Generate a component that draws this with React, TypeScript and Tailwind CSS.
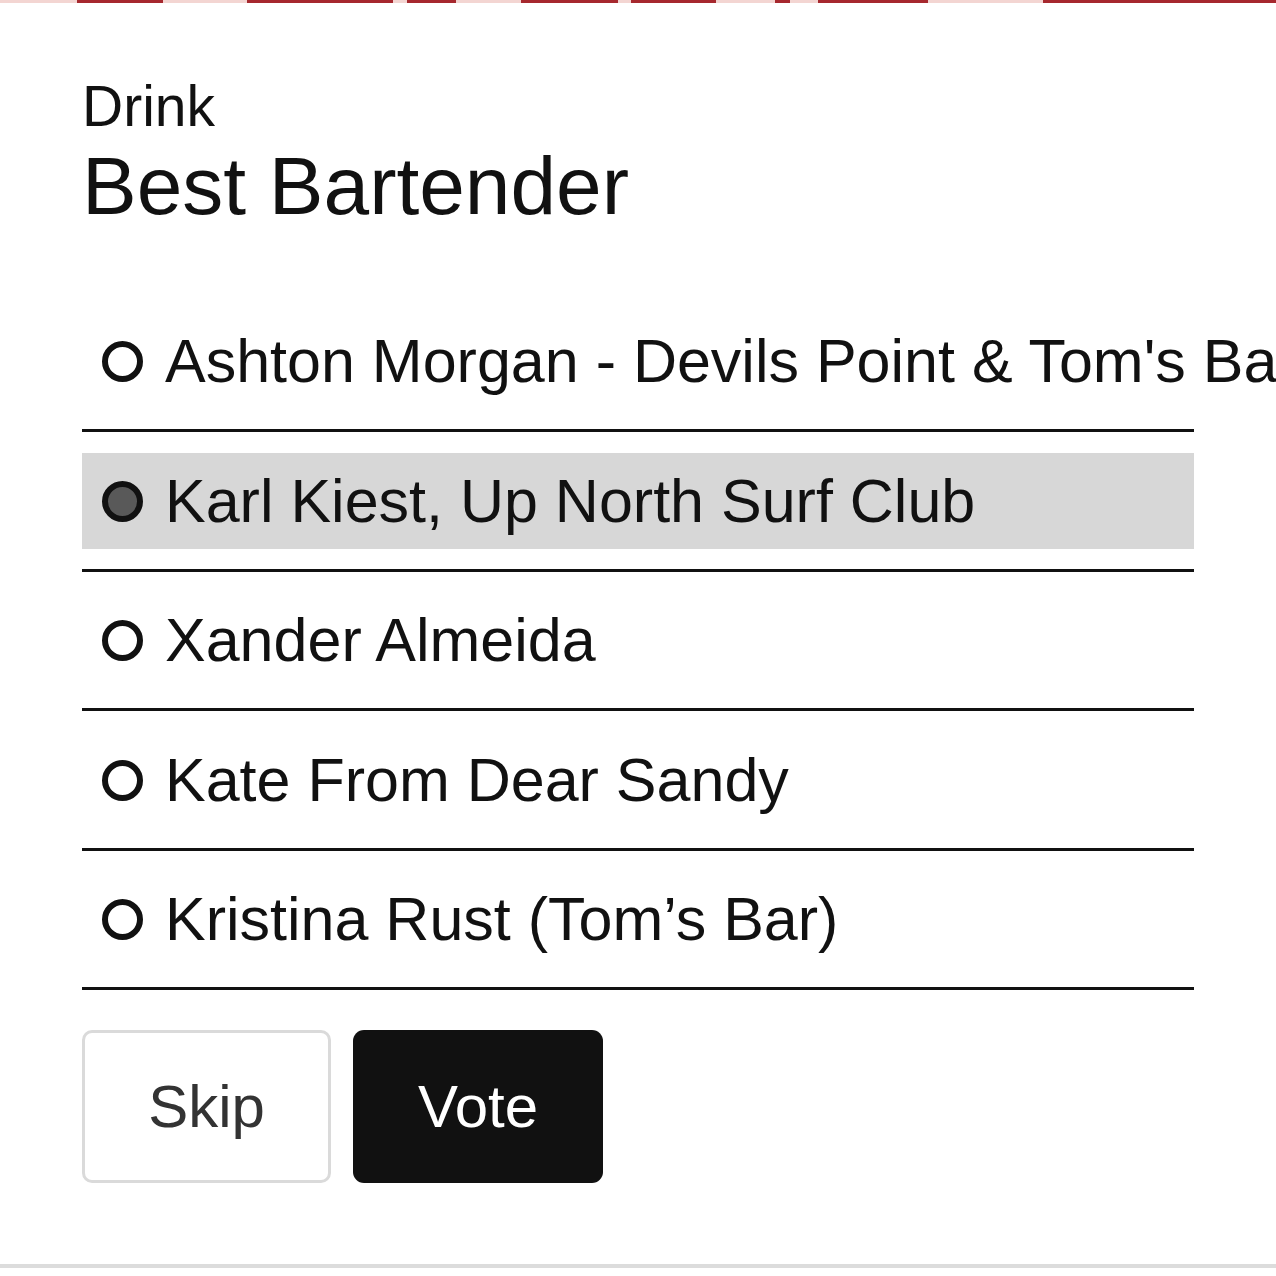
import { useState } from 'react';

const NOMINEES = [
  'Ashton Morgan - Devils Point & Tom\'s Bar',
  'Karl Kiest, Up North Surf Club',
  'Xander Almeida',
  'Kate From Dear Sandy',
  'Kristina Rust (Tom’s Bar)',
];

// red banner edge peeking in at the top
const STRIPES: [number, number][] = [
  [77, 86],
  [247, 146],
  [407, 49],
  [521, 97],
  [631, 85],
  [775, 15],
  [818, 110],
  [1043, 233],
];

function TopEdge() {
  return (
    <svg width="1276" height="3" viewBox="0 0 1276 3" className="block shrink-0">
      <rect x="0" y="0" width="1276" height="3" fill="#f3d5d2" />
      {STRIPES.map(([x, w]) => (
        <rect key={x} x={x} y="0" width={w} height="3" fill="#a6282e" />
      ))}
    </svg>
  );
}

function Radio({ checked }: { checked: boolean }) {
  return (
    <span
      className={`w-[41px] h-[41px] shrink-0 rounded-full border-[6px] border-[#111] ${
        checked ? 'bg-[#595959]' : 'bg-white'
      }`}
    />
  );
}

export default function App() {
  const [selected, setSelected] = useState(1);

  return (
    <div
      className="w-full h-[1276px] overflow-hidden bg-white flex flex-col text-[#111]"
      style={{ fontFamily: '"Liberation Sans", Arial, Helvetica, sans-serif' }}
    >
      <TopEdge />

      <div className="pl-[82px] w-[1194px] flex flex-col">
        {/* Header */}
        <div className="mt-[75px] text-[57px] leading-none">Drink</div>
        <h1 className="mt-[10px] text-[82px] leading-none">Best Bartender</h1>

        {/* Options */}
        <div className="mt-[65.5px] flex flex-col">
          {NOMINEES.map((name, i) => (
            <div key={name} className="pt-[21px] pb-[19.5px] border-b-[3px] border-[#111]">
              <label
                onClick={() => setSelected(i)}
                className={`h-[96px] flex items-center gap-[22px] pl-[20px] cursor-pointer ${
                  selected === i ? 'bg-[#d7d7d7]' : ''
                }`}
              >
                <Radio checked={selected === i} />
                <span className="text-[61px] leading-none whitespace-nowrap">{name}</span>
              </label>
            </div>
          ))}
        </div>

        {/* Actions */}
        <div className="mt-[40px] flex gap-[22px]">
          <button className="w-[249px] h-[153px] rounded-[10px] border-[3px] border-[#dadada] bg-white text-[#333] text-[60px] leading-none">
            Skip
          </button>
          <button className="w-[250px] h-[153px] rounded-[11px] bg-[#111] text-white text-[60px] leading-none">
            Vote
          </button>
        </div>
      </div>

      <div className="mt-[81px] h-[4px] w-full shrink-0 bg-[#dcdcdc]" />
    </div>
  );
}
